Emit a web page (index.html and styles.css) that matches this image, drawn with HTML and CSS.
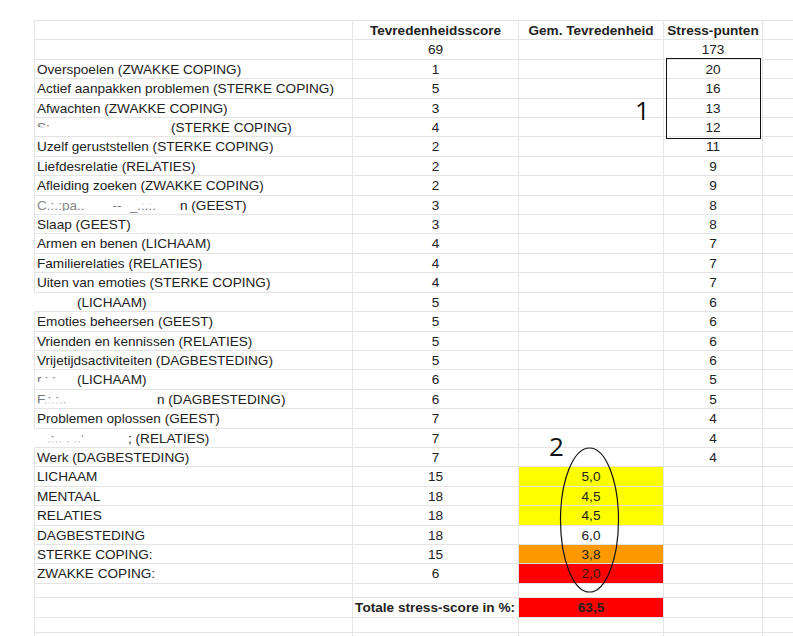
FILE: index.html
```html
<!DOCTYPE html>
<html>
<head>
<meta charset="utf-8">
<link rel="stylesheet" href="styles.css">
</head>
<body>
<div class="page">
  <div class="sheet">
    <div class="cell"></div><div class="cell c b">Tevredenheidsscore</div><div class="cell c b">Gem. Tevredenheid</div><div class="cell c b">Stress-punten</div><div class="cell"></div>
    <div class="cell"></div><div class="cell c">69</div><div class="cell"></div><div class="cell c">173</div><div class="cell"></div>

    <div class="cell l">Overspoelen (ZWAKKE COPING)</div><div class="cell c">1</div><div class="cell"></div><div class="cell c">20</div><div class="cell"></div>
    <div class="cell l">Actief aanpakken problemen (STERKE COPING)</div><div class="cell c">5</div><div class="cell"></div><div class="cell c">16</div><div class="cell"></div>
    <div class="cell l">Afwachten (ZWAKKE COPING)</div><div class="cell c">3</div><div class="cell"></div><div class="cell c">13</div><div class="cell"></div>
    <div class="cell l"><span class="lead w1"><span class="frag">S:</span></span>(STERKE COPING)</div><div class="cell c">4</div><div class="cell"></div><div class="cell c">12</div><div class="cell"></div>
    <div class="cell l">Uzelf geruststellen (STERKE COPING)</div><div class="cell c">2</div><div class="cell"></div><div class="cell c">11</div><div class="cell"></div>
    <div class="cell l">Liefdesrelatie (RELATIES)</div><div class="cell c">2</div><div class="cell"></div><div class="cell c">9</div><div class="cell"></div>
    <div class="cell l">Afleiding zoeken (ZWAKKE COPING)</div><div class="cell c">2</div><div class="cell"></div><div class="cell c">9</div><div class="cell"></div>
    <div class="cell l"><span class="lead w2"><span class="frag f2">C.:.:pa..</span><span class="frag f3">--</span><span class="frag f4">_.:.:.</span></span>n (GEEST)</div><div class="cell c">3</div><div class="cell"></div><div class="cell c">8</div><div class="cell"></div>
    <div class="cell l">Slaap (GEEST)</div><div class="cell c">3</div><div class="cell"></div><div class="cell c">8</div><div class="cell"></div>
    <div class="cell l">Armen en benen (LICHAAM)</div><div class="cell c">4</div><div class="cell"></div><div class="cell c">7</div><div class="cell"></div>
    <div class="cell l">Familierelaties (RELATIES)</div><div class="cell c">4</div><div class="cell"></div><div class="cell c">7</div><div class="cell"></div>
    <div class="cell l">Uiten van emoties (STERKE COPING)</div><div class="cell c">4</div><div class="cell"></div><div class="cell c">7</div><div class="cell"></div>
    <div class="cell l noleft"><span class="lead w3"></span>(LICHAAM)</div><div class="cell c">5</div><div class="cell"></div><div class="cell c">6</div><div class="cell"></div>
    <div class="cell l">Emoties beheersen (GEEST)</div><div class="cell c">5</div><div class="cell"></div><div class="cell c">6</div><div class="cell"></div>
    <div class="cell l">Vrienden en kennissen (RELATIES)</div><div class="cell c">5</div><div class="cell"></div><div class="cell c">6</div><div class="cell"></div>
    <div class="cell l">Vrijetijdsactiviteiten (DAGBESTEDING)</div><div class="cell c">5</div><div class="cell"></div><div class="cell c">6</div><div class="cell"></div>
    <div class="cell l"><span class="lead w4"><span class="frag f5">r.:.:.</span></span>(LICHAAM)</div><div class="cell c">6</div><div class="cell"></div><div class="cell c">5</div><div class="cell"></div>
    <div class="cell l"><span class="lead w5"><span class="frag f6">F.:.:.,</span></span>n (DAGBESTEDING)</div><div class="cell c">6</div><div class="cell"></div><div class="cell c">5</div><div class="cell"></div>
    <div class="cell l">Problemen oplossen (GEEST)</div><div class="cell c">7</div><div class="cell"></div><div class="cell c">4</div><div class="cell"></div>
    <div class="cell l noleft"><span class="lead w6"><span class="frag f7">.:.. ,  ..'</span></span>; (RELATIES)</div><div class="cell c">7</div><div class="cell"></div><div class="cell c">4</div><div class="cell"></div>
    <div class="cell l">Werk (DAGBESTEDING)</div><div class="cell c">7</div><div class="cell"></div><div class="cell c">4</div><div class="cell"></div>

    <div class="cell l">LICHAAM</div><div class="cell c">15</div><div class="cell c yel">5,0</div><div class="cell"></div><div class="cell"></div>
    <div class="cell l">MENTAAL</div><div class="cell c">18</div><div class="cell c yel">4,5</div><div class="cell"></div><div class="cell"></div>
    <div class="cell l">RELATIES</div><div class="cell c">18</div><div class="cell c yel">4,5</div><div class="cell"></div><div class="cell"></div>
    <div class="cell l">DAGBESTEDING</div><div class="cell c">18</div><div class="cell c">6,0</div><div class="cell"></div><div class="cell"></div>
    <div class="cell l">STERKE COPING:</div><div class="cell c">15</div><div class="cell c ora">3,8</div><div class="cell"></div><div class="cell"></div>
    <div class="cell l">ZWAKKE COPING:</div><div class="cell c">6</div><div class="cell c red">2,0</div><div class="cell"></div><div class="cell"></div>

    <div class="cell"></div><div class="cell"></div><div class="cell"></div><div class="cell"></div><div class="cell"></div>
    <div class="cell"></div><div class="cell rt b">Totale stress-score in %:</div><div class="cell c b red">63,5</div><div class="cell"></div><div class="cell"></div>
    <div class="cell"></div><div class="cell"></div><div class="cell"></div><div class="cell"></div><div class="cell"></div>
    <div class="cell"></div><div class="cell"></div><div class="cell"></div><div class="cell"></div><div class="cell"></div>
  </div>

  <div class="note n1">1</div>
  <div class="box"></div>
  <div class="note n2">2</div>
  <svg class="oval" width="62" height="148" viewBox="0 0 62 148">
    <ellipse cx="30.5" cy="73" rx="29" ry="72" fill="none" stroke="#111" stroke-width="1.2"/>
  </svg>
</div>
</body>
</html>
```

FILE: styles.css
```css
html, body {
  margin: 0;
  padding: 0;
  background: #fff;
  overflow: hidden;
}

.page {
  position: relative;
  width: 793px;
  height: 636px;
  overflow: hidden;
}

.sheet {
  margin: 20px 0 0 34px;
  display: grid;
  grid-template-columns: 318px 166px 145px 99px 60px;
  grid-template-rows: repeat(29, 19.41px) 14px 20px 15px 20px;
  border-top: 1px solid #e4e4e4;
  border-left: 1px solid #e4e4e4;
  font-family: "Liberation Sans", Arial, sans-serif;
  font-size: 13.6px;
  color: #222;
}

.cell {
  border-right: 1px solid #e4e4e4;
  border-bottom: 1px solid #e4e4e4;
  line-height: 18px;
  padding-top: 1px;
  white-space: nowrap;
  overflow: hidden;
}

.c { text-align: center; }
.l { padding-left: 2px; }
.rt { text-align: right; padding-right: 3px; }
.b { font-weight: bold; }

.yel { background: #ffff00; }
.ora { background: #ff9900; }
.red { background: #ff0000; }

.noleft { box-shadow: -1px 0 0 #fff; }

.lead {
  display: inline-block;
  vertical-align: top;
  overflow: hidden;
}
.w1 { width: 134px; }
.w2 { width: 143px; }
.w3 { width: 40px; }
.w4 { width: 40px; }
.w5 { width: 120px; }
.w6 { width: 91px; }

.frag {
  color: #777;
  clip-path: inset(0 0 55% 0);
  display: inline-block;
}
.f2 { clip-path: inset(15% 0 20% 0); color: #888; }
.f3 { margin-left: 28px; clip-path: inset(35% 0 40% 0); }
.f4 { margin-left: 8px; clip-path: inset(40% 0 0 0); }
.f5 { clip-path: inset(20% 0 40% 0); }
.f6 { clip-path: inset(10% 0 30% 0); }
.f7 { clip-path: inset(30% 0 30% 0); margin-left: 10px; }

.note {
  position: absolute;
  font-family: "Open Sans", "Noto Sans", sans-serif;
  font-size: 26px;
  line-height: 1;
  color: #111;
}
.n1 { left: 635px; top: 97px; }
.n2 { left: 549px; top: 433px; }

.box {
  position: absolute;
  left: 666px;
  top: 58px;
  width: 93px;
  height: 79px;
  border: 1px solid #111;
}

.oval {
  position: absolute;
  left: 559px;
  top: 447px;
}
```
